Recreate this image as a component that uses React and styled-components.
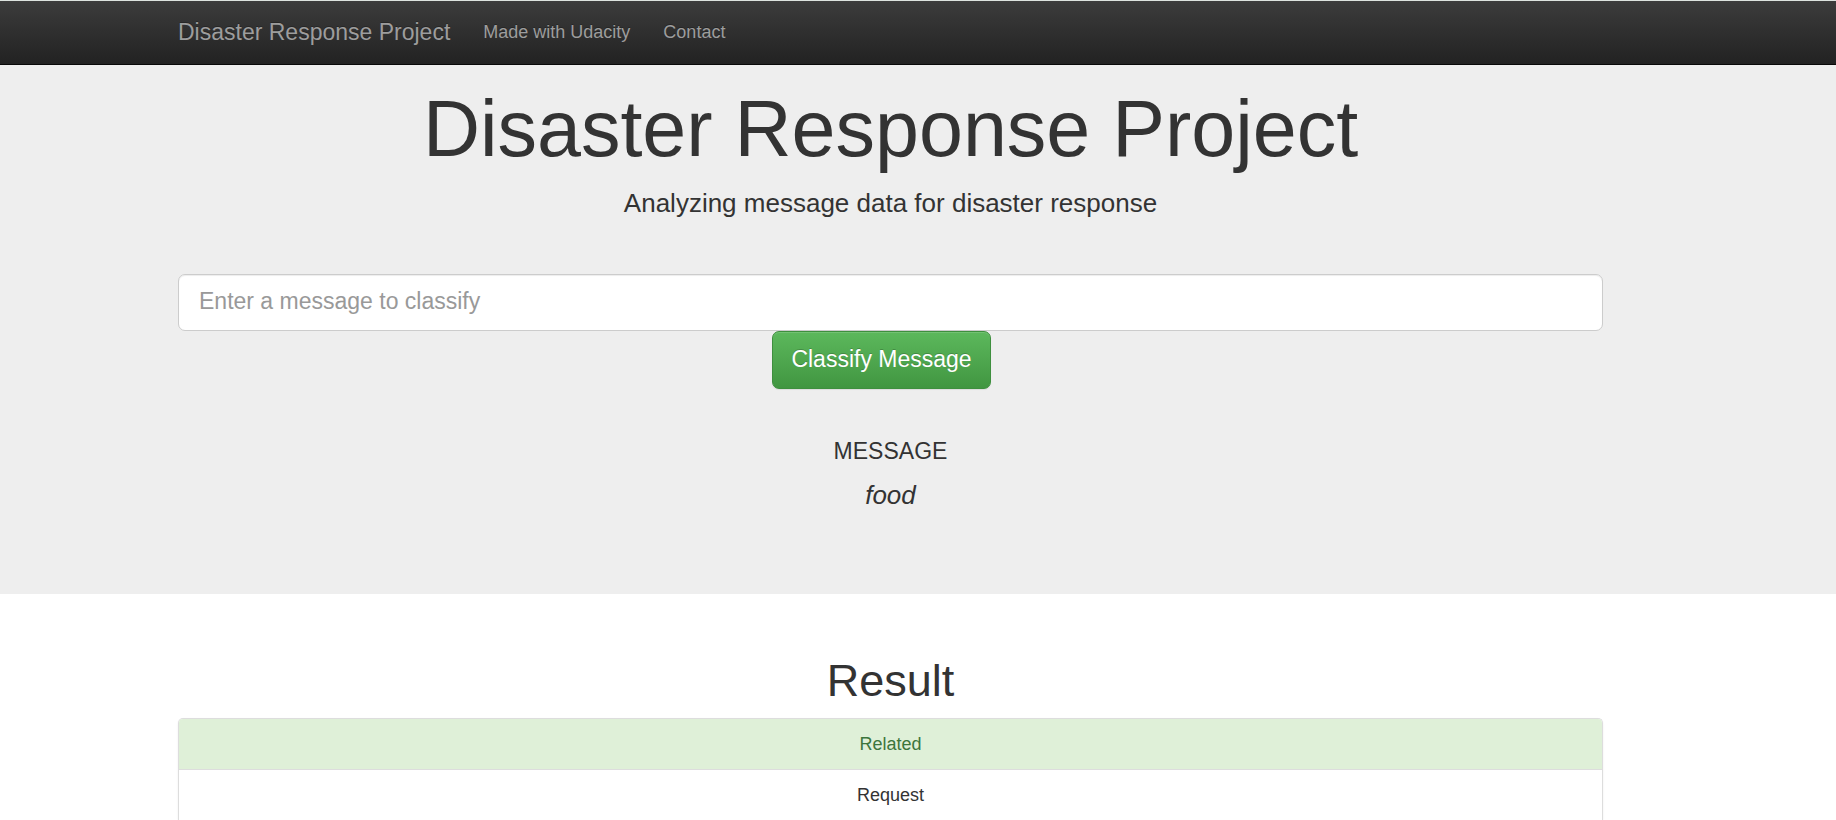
import React from "react";
import styled, { createGlobalStyle } from "styled-components";

const GlobalStyle = createGlobalStyle`
  *, *::before, *::after { box-sizing: border-box; }
  body {
    margin: 0;
    background: #fff;
    color: #333;
    font-family: "Liberation Sans", Arial, sans-serif;
    font-size: 18px;
    line-height: 24px;
  }
`;

const Container = styled.div`
  max-width: 1425px;
  margin: 0 auto;
`;

const Navbar = styled.nav`
  padding-right: 55px;
  border-top: 1px solid #dde3df;
  border-bottom: 1px solid #090909;
  background: linear-gradient(to bottom, #3c3c3c 0%, #222 100%);
`;

const NavRow = styled(Container)`
  display: flex;
  align-items: center;
  gap: 33px;
  height: 63px;
  padding-bottom: 2px;
`;

const NavLink = styled.a`
  color: #9d9d9d;
  font-size: ${(p) => (p.$brand ? 23 : 18)}px;
  text-decoration: none;
  text-shadow: 0 -1px 0 rgba(0, 0, 0, 0.25);
`;

const Hero = styled.header`
  padding: 20px 55px 81px 0;
  background: #eee;
  text-align: center;
`;

const Title = styled.h1`
  margin: 0 0 12px;
  font-size: 79px;
  font-weight: 400;
  line-height: 88px;
`;

const Lead = styled.p`
  margin: 0;
  font-size: 26px;
  line-height: 36px;
`;

const ClassifyForm = styled.form`
  margin: 53px 0 44px;
`;

const MessageInput = styled.input`
  display: block;
  width: 100%;
  height: 57px;
  padding: 11px 20px 13px;
  border: 1px solid #ccc;
  border-radius: 7px;
  background: #fff;
  box-shadow: inset 0 1px 1px rgba(0, 0, 0, 0.075);
  color: #555;
  font: inherit;
  font-size: 23px;

  &::placeholder { color: #999; opacity: 1; }
`;

const FormActions = styled.div`
  display: flex;
  justify-content: center;
  padding-right: 18px;
`;

const SubmitButton = styled.button`
  height: 58px;
  min-width: 219px;
  padding: 0 18px 2px;
  border: 1px solid #3e8f3e;
  border-radius: 7px;
  background: linear-gradient(to bottom, #5cb85c 0%, #419641 100%);
  box-shadow: inset 0 1px 0 rgba(255, 255, 255, 0.15), 0 1px 1px rgba(0, 0, 0, 0.075);
  color: #fff;
  font: inherit;
  font-size: 23px;
  text-shadow: 0 -1px 0 rgba(0, 0, 0, 0.2);
  cursor: pointer;
`;

const MessageLabel = styled.h4`
  margin: 0 0 8px;
  font-size: 23px;
  font-weight: 400;
  line-height: 36px;
`;

const Query = styled(Lead)`
  font-style: italic;
`;

const Results = styled.main`
  padding: 62px 55px 0 0;
  text-align: center;
`;

const ResultTitle = styled.h2`
  margin: 0 0 12px;
  font-size: 45px;
  font-weight: 400;
  line-height: 50px;
`;

const ResultList = styled.ul`
  margin: 0;
  padding: 0;
  overflow: hidden;
  list-style: none;
  border: 1px solid #ddd;
  border-bottom: 0;
  border-radius: 5px 5px 0 0;
  box-shadow: 0 1px 2px rgba(0, 0, 0, 0.075);
`;

const ResultItem = styled.li`
  padding: 13px 19px;
  background: ${(p) => (p.$active ? "#dff0d8" : "#fff")};
  color: ${(p) => (p.$active ? "#3c763d" : "#333")};

  & + & { border-top: 1px solid #ddd; }
`;

const categories = [
  { name: "Related", active: true },
  { name: "Request", active: false },
];

export default function App() {
  return (
    <>
      <GlobalStyle />
      <Navbar>
        <NavRow>
          <NavLink href="#" $brand>Disaster Response Project</NavLink>
          <NavLink href="#udacity">Made with Udacity</NavLink>
          <NavLink href="#contact">Contact</NavLink>
        </NavRow>
      </Navbar>
      <Hero>
        <Container>
          <Title>Disaster Response Project</Title>
          <Lead>Analyzing message data for disaster response</Lead>
          <ClassifyForm onSubmit={(e) => e.preventDefault()}>
            <MessageInput
              type="text"
              name="query"
              aria-label="Enter a message to classify"
              placeholder="Enter a message to classify"
            />
            <FormActions>
              <SubmitButton type="submit">Classify Message</SubmitButton>
            </FormActions>
          </ClassifyForm>
          <MessageLabel>MESSAGE</MessageLabel>
          <Query>food</Query>
        </Container>
      </Hero>
      <Results>
        <Container>
          <ResultTitle>Result</ResultTitle>
          <ResultList>
            {categories.map((c) => (
              <ResultItem key={c.name} $active={c.active}>{c.name}</ResultItem>
            ))}
          </ResultList>
        </Container>
      </Results>
    </>
  );
}
